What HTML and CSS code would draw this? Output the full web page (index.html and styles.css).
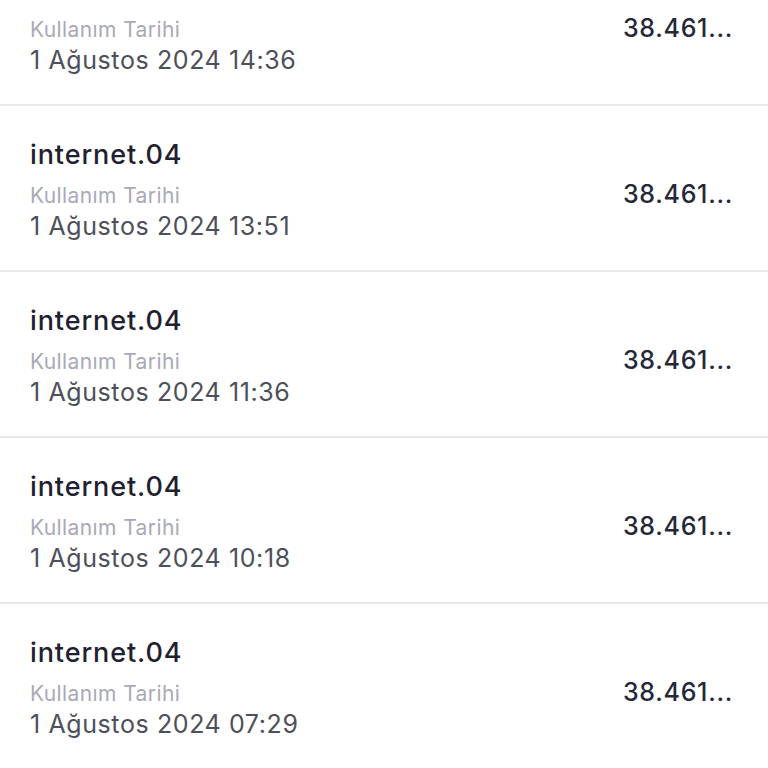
FILE: index.html
```html
<!DOCTYPE html>
<html lang="tr">
<head>
    <meta charset="UTF-8">
    <meta name="viewport" content="width=device-width, initial-scale=1.0">
    <title>Kullanım Geçmişi</title>
    <link rel="stylesheet" href="styles.css">
</head>
<body>

<div class="list">
    <div class="row">
        <div class="info">
            <div class="title">internet.04</div>
            <div class="label">Kullanım Tarihi</div>
            <div class="date">1 Ağustos 2024 14:36</div>
        </div>
        <div class="amount">38.461...</div>
    </div>
    <div class="row">
        <div class="info">
            <div class="title">internet.04</div>
            <div class="label">Kullanım Tarihi</div>
            <div class="date">1 Ağustos 2024 13:51</div>
        </div>
        <div class="amount">38.461...</div>
    </div>
    <div class="row">
        <div class="info">
            <div class="title">internet.04</div>
            <div class="label">Kullanım Tarihi</div>
            <div class="date">1 Ağustos 2024 11:36</div>
        </div>
        <div class="amount">38.461...</div>
    </div>
    <div class="row">
        <div class="info">
            <div class="title">internet.04</div>
            <div class="label">Kullanım Tarihi</div>
            <div class="date">1 Ağustos 2024 10:18</div>
        </div>
        <div class="amount">38.461...</div>
    </div>
    <div class="row">
        <div class="info">
            <div class="title">internet.04</div>
            <div class="label">Kullanım Tarihi</div>
            <div class="date">1 Ağustos 2024 07:29</div>
        </div>
        <div class="amount">38.461...</div>
    </div>
</div>

</body>
</html>
```

FILE: styles.css
```css
body {
    font-family: Inter, "Noto Sans", sans-serif;
    background-color: #fff;
    margin: 0;
    padding: 0;
    overflow: hidden;
}
.list {
    margin-top: -60px;
}
.row {
    display: flex;
    align-items: center;
    justify-content: space-between;
    height: 164px;
    padding: 0 35px 0 30px;
    border-bottom: 2px solid #e8e8ea;
}
.info {
    display: flex;
    flex-direction: column;
    padding-top: 3px;
}
.title {
    font-size: 27px;
    line-height: 34px;
    font-weight: 500;
    letter-spacing: 0.9px;
    color: #1f2130;
    margin-bottom: 10px;
}
.label {
    font-size: 21px;
    line-height: 28px;
    letter-spacing: 0.4px;
    color: #a9a9b7;
}
.date {
    font-size: 25px;
    line-height: 32px;
    letter-spacing: 0.6px;
    color: #4d505a;
}
.amount {
    font-size: 25px;
    font-weight: 500;
    letter-spacing: 0.7px;
    color: #252838;
    margin-top: 12px;
}
```
